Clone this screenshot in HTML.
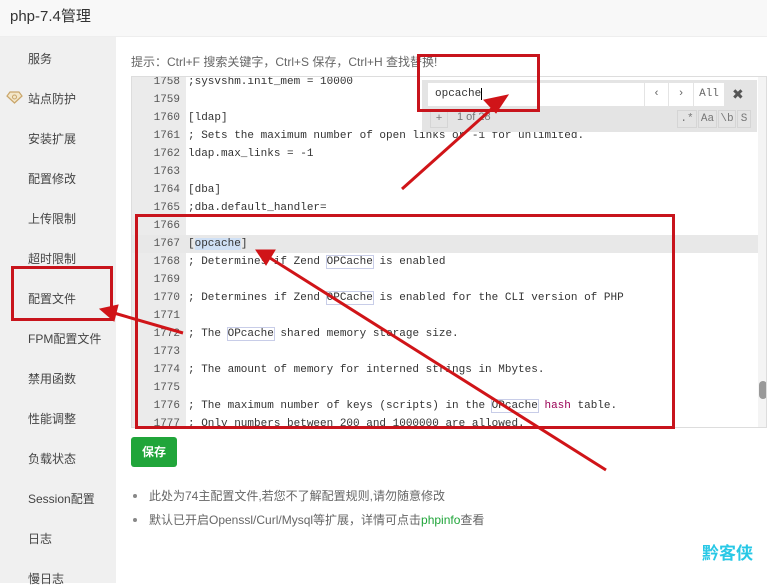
<!DOCTYPE html>
<html><head><meta charset="utf-8"><style>
*{margin:0;padding:0;box-sizing:border-box}
body{width:767px;height:583px;overflow:hidden;background:#fff;font-family:"Liberation Sans","Noto Sans CJK SC",sans-serif;position:relative;color:#333}
.hd{position:absolute;left:0;top:0;width:767px;height:37px;background:#f8f8f8;border-bottom:1px solid #eee;font-size:15px;line-height:34px;padding-left:10px;color:#333}
.sb{position:absolute;left:0;top:37px;width:116px;height:546px;background:#f0f0f0}
.sb div{position:absolute;left:28px;font-size:12px;color:#444;line-height:16px}
.tip{position:absolute;left:131px;top:53px;font-size:12px;color:#666}
.ed{position:absolute;left:131px;top:76px;width:636px;height:352px;border:1px solid #ddd;overflow:hidden;background:#fff}
.gut{position:absolute;left:0;top:0;width:54px;height:100%;background:#ebebeb}
.ln{position:absolute;left:0;width:636px;height:18px;font-family:"Liberation Mono",monospace;font-size:11px;line-height:18px;color:#333;white-space:pre}
.ln b{font-weight:normal;display:inline-block;width:48px;text-align:right;color:#555;margin-right:8px}
.m{outline:1px solid #c8cde8}
.sel{background:#cfe0f5}
.srch{position:absolute;left:422px;top:80px;width:335px;height:52px;background:#e4e4e4}
.srch .in{position:absolute;left:6px;top:3px;width:222px;height:23px;background:#fff;font-family:"Liberation Mono",monospace;font-size:11px;line-height:23px;padding-left:7px}
.btn{position:absolute;top:3px;height:23px;background:#fff;font-size:11px;line-height:23px;text-align:center;color:#666;font-family:"Liberation Mono",monospace;border-left:1px solid #e4e4e4}
.sm{position:absolute;top:30px;height:18px;border:1px solid #d5d5d5;font-size:11px;line-height:16px;color:#777;text-align:center;font-family:"Liberation Mono",monospace}
.save{position:absolute;left:131px;top:437px;width:46px;height:30px;background:#20a53a;border-radius:3px;color:#fff;font-size:12px;font-weight:bold;line-height:30px;text-align:center}
.li{position:absolute;left:131px;font-size:12px;color:#666}
.li i{display:inline-block;width:4px;height:4px;background:#888;border-radius:50%;margin:0 12px 2px 2px}
.rb{position:absolute;border:3px solid #c8141c}
</style></head><body>
<div class="hd">php-7.4管理</div>
<div class="sb">
<div style="top:14px">服务</div>
<div style="top:54px">站点防护</div>
<div style="top:94px">安装扩展</div>
<div style="top:134px">配置修改</div>
<div style="top:174px">上传限制</div>
<div style="top:214px">超时限制</div>
<div style="top:254px">配置文件</div>
<div style="top:294px">FPM配置文件</div>
<div style="top:334px">禁用函数</div>
<div style="top:374px">性能调整</div>
<div style="top:414px">负载状态</div>
<div style="top:454px">Session配置</div>
<div style="top:494px">日志</div>
<div style="top:534px">慢日志</div>
</div>
<svg style="position:absolute;left:6px;top:91px" width="17" height="13" viewBox="0 0 17 13"><path d="M4 1h9l3 4-7.5 7L1 5z" fill="#f3e6c8" stroke="#c9a56a" stroke-width="1.2"/><circle cx="8.5" cy="6" r="2" fill="none" stroke="#c9a56a"/></svg>
<div class="tip">提示：Ctrl+F 搜索关键字，Ctrl+S 保存，Ctrl+H 查找替换!</div>
<div class="ed">
<div class="gut"></div>
<div class="ln" style="top:-4px"><b>1758</b>;sysvshm.init_mem = 10000</div>
<div class="ln" style="top:14px"><b>1759</b></div>
<div class="ln" style="top:32px"><b>1760</b>[ldap]</div>
<div class="ln" style="top:50px"><b>1761</b>; Sets the maximum number of open links or -1 for unlimited.</div>
<div class="ln" style="top:68px"><b>1762</b>ldap.max_links = -1</div>
<div class="ln" style="top:86px"><b>1763</b></div>
<div class="ln" style="top:104px"><b>1764</b>[dba]</div>
<div class="ln" style="top:122px"><b>1765</b>;dba.default_handler=</div>
<div class="ln" style="top:140px"><b>1766</b></div>
<div class="ln" style="top:158px;background:#e8e8e8"><b>1767</b>[<span class="sel">opcache</span>]</div>
<div class="ln" style="top:176px"><b>1768</b>; Determines if Zend <span class="m">OPCache</span> is enabled</div>
<div class="ln" style="top:194px"><b>1769</b></div>
<div class="ln" style="top:212px"><b>1770</b>; Determines if Zend <span class="m">OPCache</span> is enabled for the CLI version of PHP</div>
<div class="ln" style="top:230px"><b>1771</b></div>
<div class="ln" style="top:248px"><b>1772</b>; The <span class="m">OPcache</span> shared memory storage size.</div>
<div class="ln" style="top:266px"><b>1773</b></div>
<div class="ln" style="top:284px"><b>1774</b>; The amount of memory for interned strings in Mbytes.</div>
<div class="ln" style="top:302px"><b>1775</b></div>
<div class="ln" style="top:320px"><b>1776</b>; The maximum number of keys (scripts) in the <span class="m">OPcache</span> <span style="color:#905">hash</span> table.</div>
<div class="ln" style="top:338px"><b>1777</b>; Only numbers between 200 and 1000000 are allowed.</div>
<div style="position:absolute;left:626px;top:0;width:10px;height:352px;background:#f4f4f4"></div>
<div style="position:absolute;left:627px;top:304px;width:8px;height:18px;background:#999;border-radius:4px"></div>
</div>
<div class="srch">
<div class="in">opcache<span style="border-left:1px solid #000"></span></div>
<div class="btn" style="left:222px;width:24px">&lsaquo;</div>
<div class="btn" style="left:246px;width:25px">&rsaquo;</div>
<div class="btn" style="left:271px;width:31px">All</div>
<div style="position:absolute;left:310px;top:3px;font-size:14px;line-height:23px;color:#555">✖</div>
<div class="sm" style="left:8px;width:18px">+</div>
<div style="position:absolute;left:35px;top:31px;font-size:11px;color:#777">1 of 28</div>
<div class="sm" style="left:255px;width:20px">.*</div>
<div class="sm" style="left:276px;width:19px">Aa</div>
<div class="sm" style="left:296px;width:18px">\b</div>
<div class="sm" style="left:315px;width:14px">S</div>
</div>
<div class="save">保存</div>
<div class="li" style="top:487px"><i></i>此处为74主配置文件,若您不了解配置规则,请勿随意修改</div>
<div class="li" style="top:511px"><i></i>默认已开启Openssl/Curl/Mysql等扩展，详情可点击<span style="color:#20a53a">phpinfo</span>查看</div>
<div style="position:absolute;left:702px;top:539px;font-size:17px;font-weight:bold;color:#28c8e6">黔客侠</div>
<div class="rb" style="left:417px;top:54px;width:123px;height:58px"></div>
<div class="rb" style="left:135px;top:214px;width:540px;height:215px"></div>
<div class="rb" style="left:11px;top:266px;width:102px;height:55px"></div>
<svg style="position:absolute;left:0;top:0" width="767" height="583">
<g stroke="#d01418" stroke-width="3" fill="#d01418">
<line x1="402" y1="189" x2="496" y2="105"/>
<polygon points="508,95 484,100 496,113" stroke-width="1"/>
<line x1="183" y1="333" x2="114" y2="313"/>
<polygon points="100,309 118,305 114,321" stroke-width="1"/>
<line x1="606" y1="470" x2="270" y2="258"/>
<polygon points="256,250 275,250 266,265" stroke-width="1"/>
</g></svg>
</body></html>
